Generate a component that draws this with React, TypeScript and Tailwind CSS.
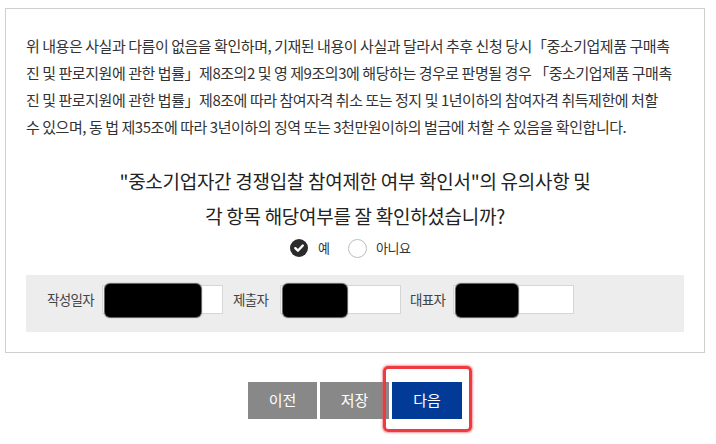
import React from "react";

const font = { fontFamily: '"Noto Sans CJK KR", "Noto Sans", sans-serif' };

function Redact({ w }: { w: number }) {
  return (
    <div
      className="absolute left-[2px] top-[-2px] h-[33px] rounded-[5px] bg-black shadow-[0_0_1px_1px_#555]"
      style={{ width: w }}
    />
  );
}

function Field({ label, blob, lw, ml }: { label: string; blob: number; lw: string; ml: string }) {
  return (
    <div className={`flex items-center ${ml}`}>
      <span className={`${lw} whitespace-nowrap text-[13.5px] tracking-[-0.05em] text-[#444] leading-[29px]`}>{label}</span>
      <div className="relative ml-[8px] w-[121px] h-[29px] bg-white border border-[#d6d6d6]">
        <Redact w={blob} />
      </div>
    </div>
  );
}

export default function App() {
  return (
    <div className="relative w-[716px] h-[444px] bg-white overflow-hidden" style={font}>
      <div className="ml-[5px] mt-[8px] w-[700px] h-[345px] border border-[#cfcfcf] px-[20px] pt-[23px]">
        <p className="text-[15px] leading-[27px] tracking-[-0.03em] text-[#333] whitespace-nowrap">
          위 내용은 사실과 다름이 없음을 확인하며, 기재된 내용이 사실과 달라서 추후 신청 당시「중소기업제품 구매촉
          <br />
          진 및 판로지원에 관한 법률」제8조의2 및 영 제9조의3에 해당하는 경우로 판명될 경우 「중소기업제품 구매촉
          <br />
          진 및 판로지원에 관한 법률」제8조에 따라 참여자격 취소 또는 정지 및 1년이하의 참여자격 취득제한에 처할
          <br />
          수 있으며, 동 법 제35조에 따라 3년이하의 징역 또는 3천만원이하의 벌금에 처할 수 있음을 확인합니다.
        </p>
        <p className="mt-[23px] text-center text-[19px] leading-[35px] tracking-[-0.015em] text-[#222] whitespace-nowrap">
          "중소기업자간 경쟁입찰 참여제한 여부 확인서"의 유의사항 및
          <br />
          각 항목 해당여부를 잘 확인하셨습니까?
        </p>
        <div className="mt-[5px] h-[20px] flex items-center pl-[264px] text-[13px] text-[#333]">
          <div className="flex items-center">
            <span className="w-[18px] h-[18px] rounded-full bg-[#2b2b2b] flex items-center justify-center">
              <svg width="12" height="12" viewBox="0 0 12 12">
                <path d="M2.3 6.2 L4.9 8.7 L9.8 3.5" fill="none" stroke="#fff" strokeWidth="2.4" strokeLinecap="round" strokeLinejoin="round" />
              </svg>
            </span>
            <span className="ml-[10px]">예</span>
          </div>
          <div className="flex items-center ml-[18px]">
            <span className="w-[19px] h-[19px] rounded-full border border-[#bdbdbd] bg-white" />
            <span className="ml-[9px] tracking-[-0.03em]">아니요</span>
          </div>
        </div>
        <div className="mt-[17px] h-[57px] bg-[#ededed] flex items-start pt-[10px] pl-[21px]">
          <Field label="작성일자" lw="w-[47px]" blob={96} ml="" />
          <Field label="제출자" lw="w-[39px]" blob={64} ml="ml-[10px]" />
          <Field label="대표자" lw="w-[35px]" blob={62} ml="ml-[9px]" />
        </div>
      </div>
      <div className="mt-[29px] pl-[248px] flex gap-[3px]">
        <button className="w-[69px] h-[37px] bg-[#888888] text-white text-[15px]">이전</button>
        <button className="w-[69px] h-[37px] bg-[#888888] text-white text-[15px]">저장</button>
        <button className="w-[70px] h-[37px] bg-[#023a98] text-white text-[15px]">다음</button>
      </div>
      <div className="absolute left-[383px] top-[366px] w-[89px] h-[66px] border-[3px] border-[#ec3b43] rounded-[5px] shadow-[0_0_2px_1px_rgba(240,80,90,0.6)]" />
    </div>
  );
}
